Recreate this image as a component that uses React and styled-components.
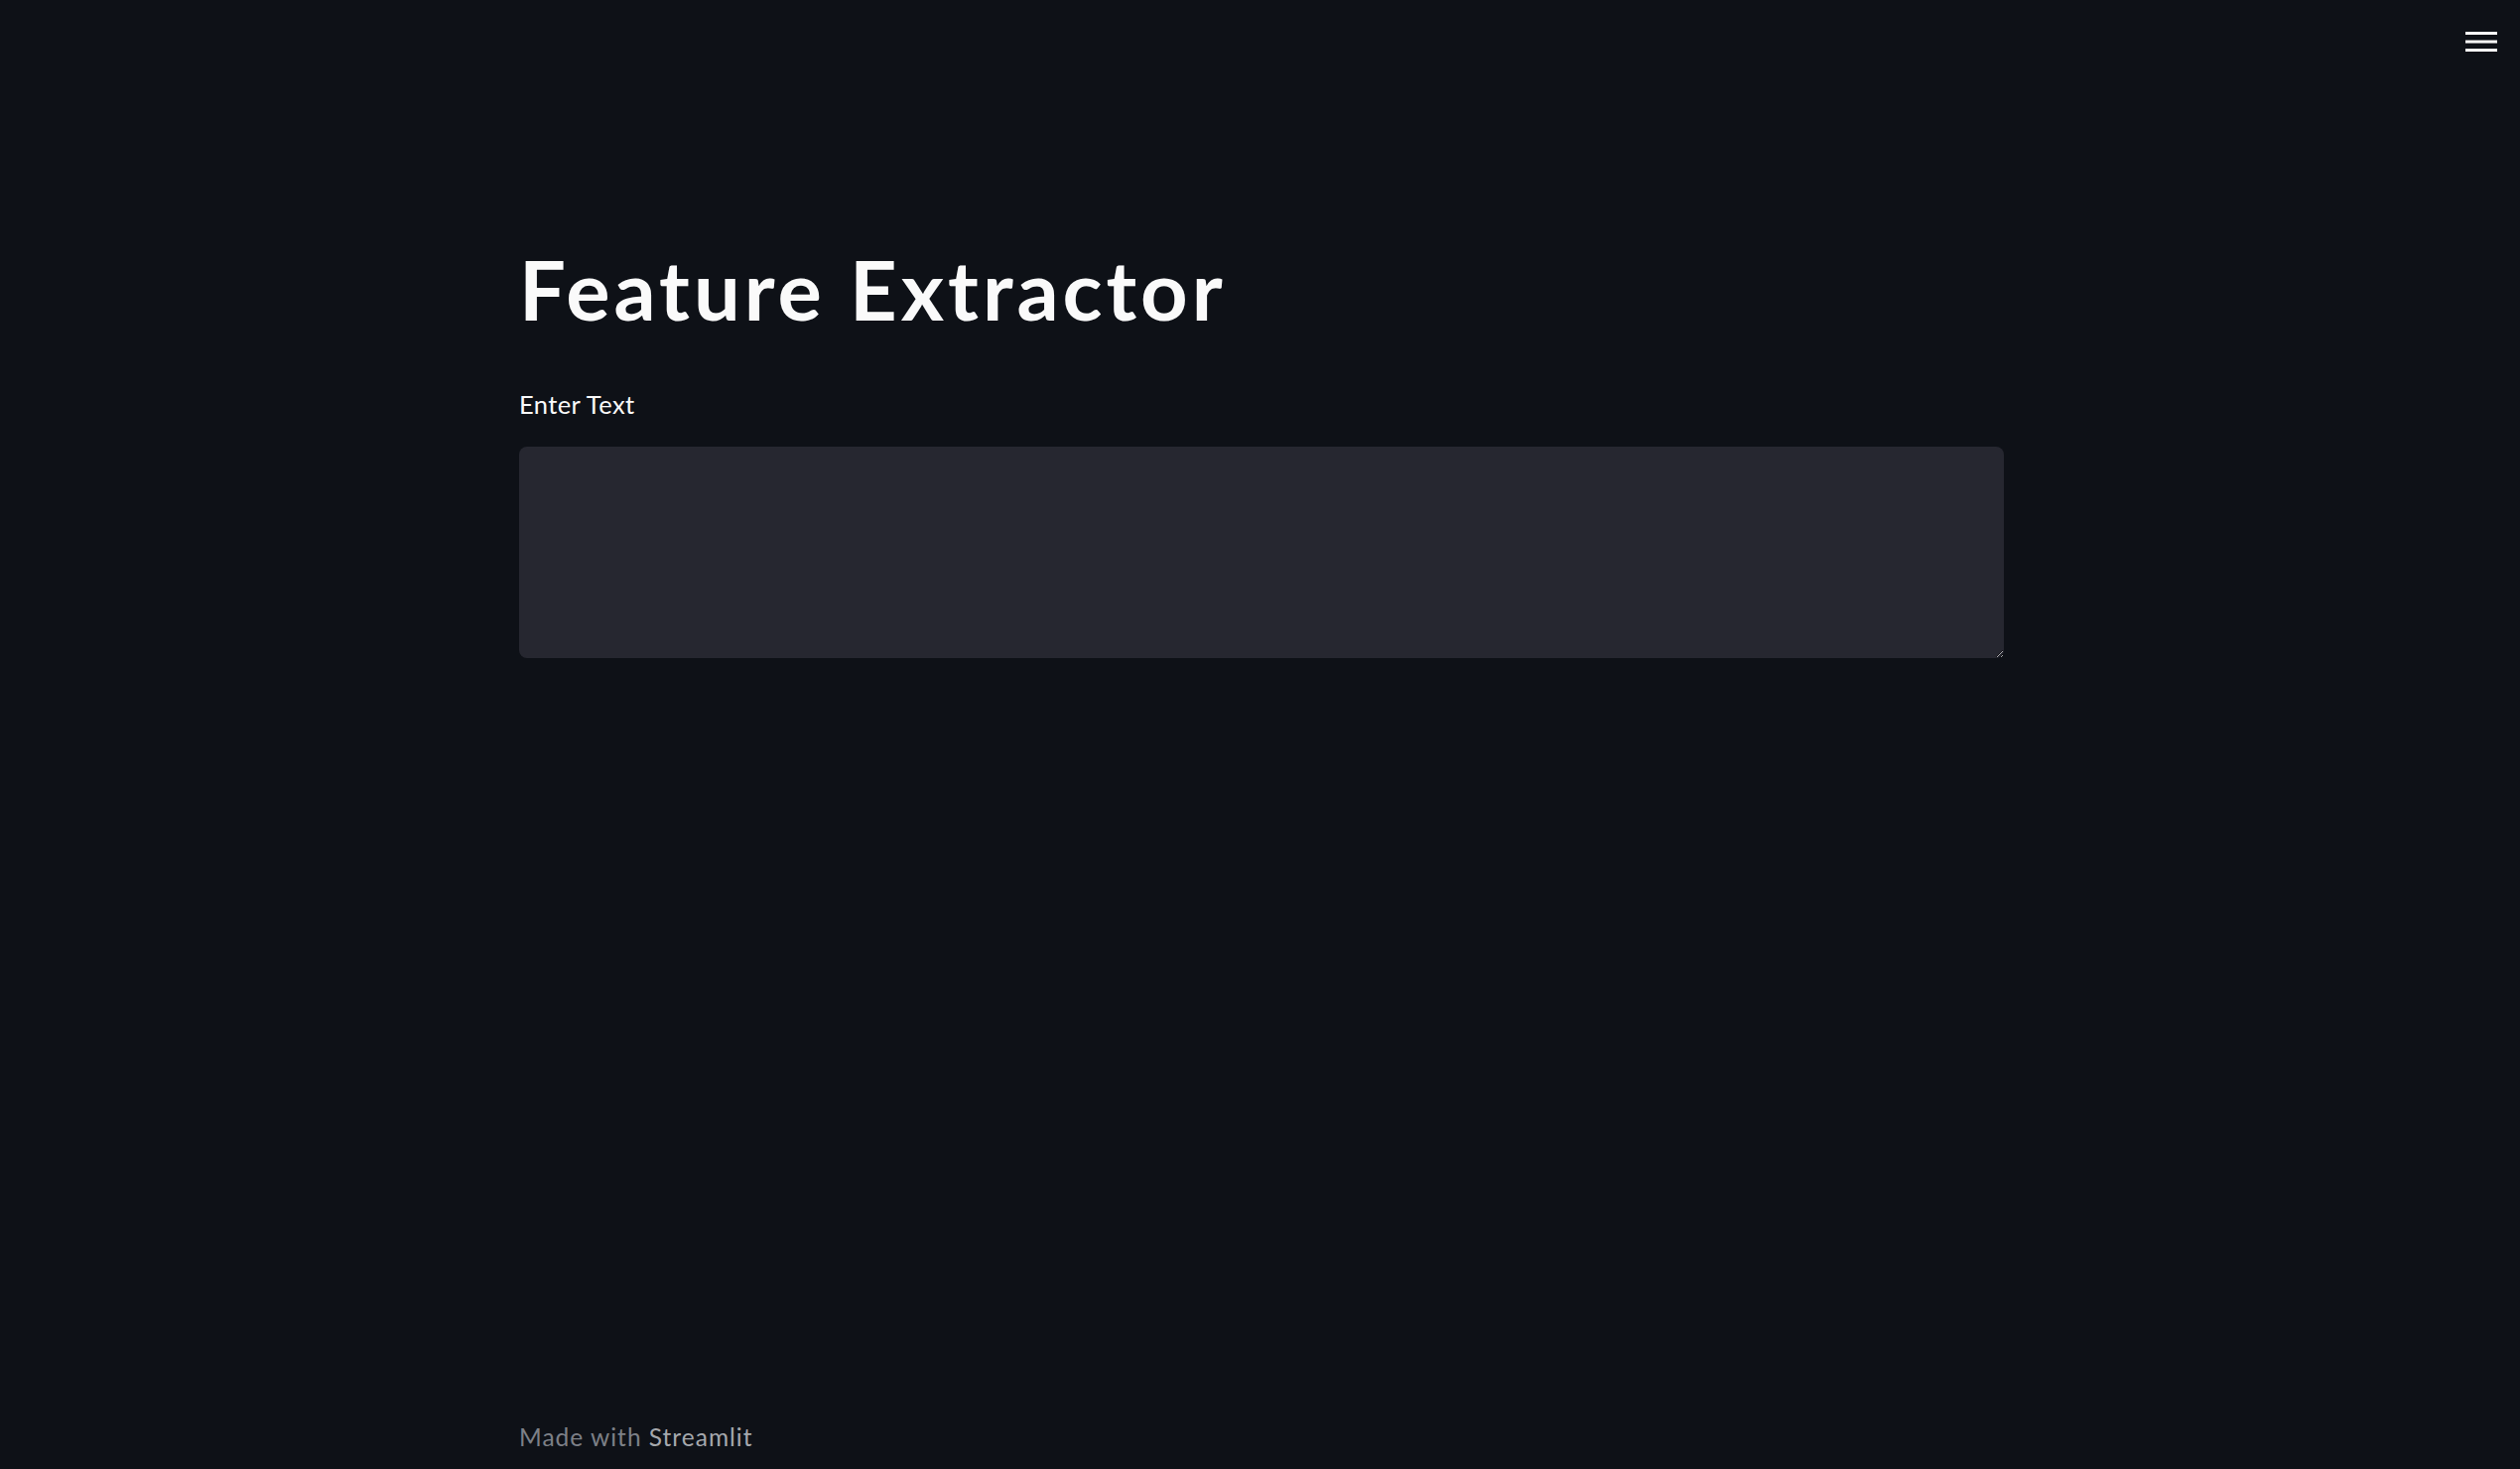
import React from "react";
import styled, { createGlobalStyle } from "styled-components";

const GlobalStyle = createGlobalStyle`
  html, body {
    margin: 0;
    padding: 0;
    background: #0e1117;
  }
  * {
    box-sizing: border-box;
  }
`;

const Page = styled.div`
  display: flex;
  flex-direction: column;
  min-height: 100vh;
  background: #0e1117;
  color: #fafafa;
  font-family: Lato, "Noto Sans", sans-serif;
`;

const TopBar = styled.header`
  display: flex;
  justify-content: flex-end;
  padding: 32px 23px 0 0;
  height: 52px;
`;

const MenuButton = styled.button`
  display: flex;
  padding: 0;
  border: none;
  background: transparent;
  cursor: pointer;
`;

const Column = styled.div`
  width: 1496px;
  margin-left: calc(50% - 746.5px);
`;

const Main = styled(Column)`
  flex: 1;
  display: flex;
  flex-direction: column;
  padding-top: 190px;
`;

const Title = styled.h1`
  margin: 0;
  font-size: 83px;
  font-weight: 700;
  line-height: 1.2;
  letter-spacing: 4px;
  color: #fafafa;
`;

const Label = styled.label`
  margin-top: 50px;
  font-size: 25.5px;
  line-height: 1.2;
  letter-spacing: 0.4px;
  color: #fafafa;
`;

const TextArea = styled.textarea`
  margin-top: 28px;
  width: 100%;
  height: 213px;
  padding: 16px 20px;
  border: none;
  border-radius: 8px;
  background: #262730;
  color: #fafafa;
  font-family: inherit;
  font-size: 25px;
  outline: none;
  resize: vertical;
`;

const Footer = styled(Column)`
  padding-bottom: 18px;
  font-size: 24.5px;
  line-height: 1.2;
  letter-spacing: 1px;
  color: #7d8087;
`;

const FooterLink = styled.a`
  color: #a5a8ad;
  text-decoration: none;
`;

const MenuIcon = () => (
  <svg width="32" height="20" viewBox="0 0 32 20">
    <rect x="0" y="0" width="32" height="3" fill="#fafafa" />
    <rect x="0" y="8.5" width="32" height="3" fill="#fafafa" />
    <rect x="0" y="17" width="32" height="3" fill="#fafafa" />
  </svg>
);

const App = () => {
  return (
    <>
      <GlobalStyle />
      <Page>
        <TopBar>
          <MenuButton aria-label="Menu">
            <MenuIcon />
          </MenuButton>
        </TopBar>
        <Main>
          <Title>Feature Extractor</Title>
          <Label htmlFor="text-input">Enter Text</Label>
          <TextArea id="text-input" />
        </Main>
        <Footer as="footer">
          Made with <FooterLink href="#">Streamlit</FooterLink>
        </Footer>
      </Page>
    </>
  );
};

export default App;
